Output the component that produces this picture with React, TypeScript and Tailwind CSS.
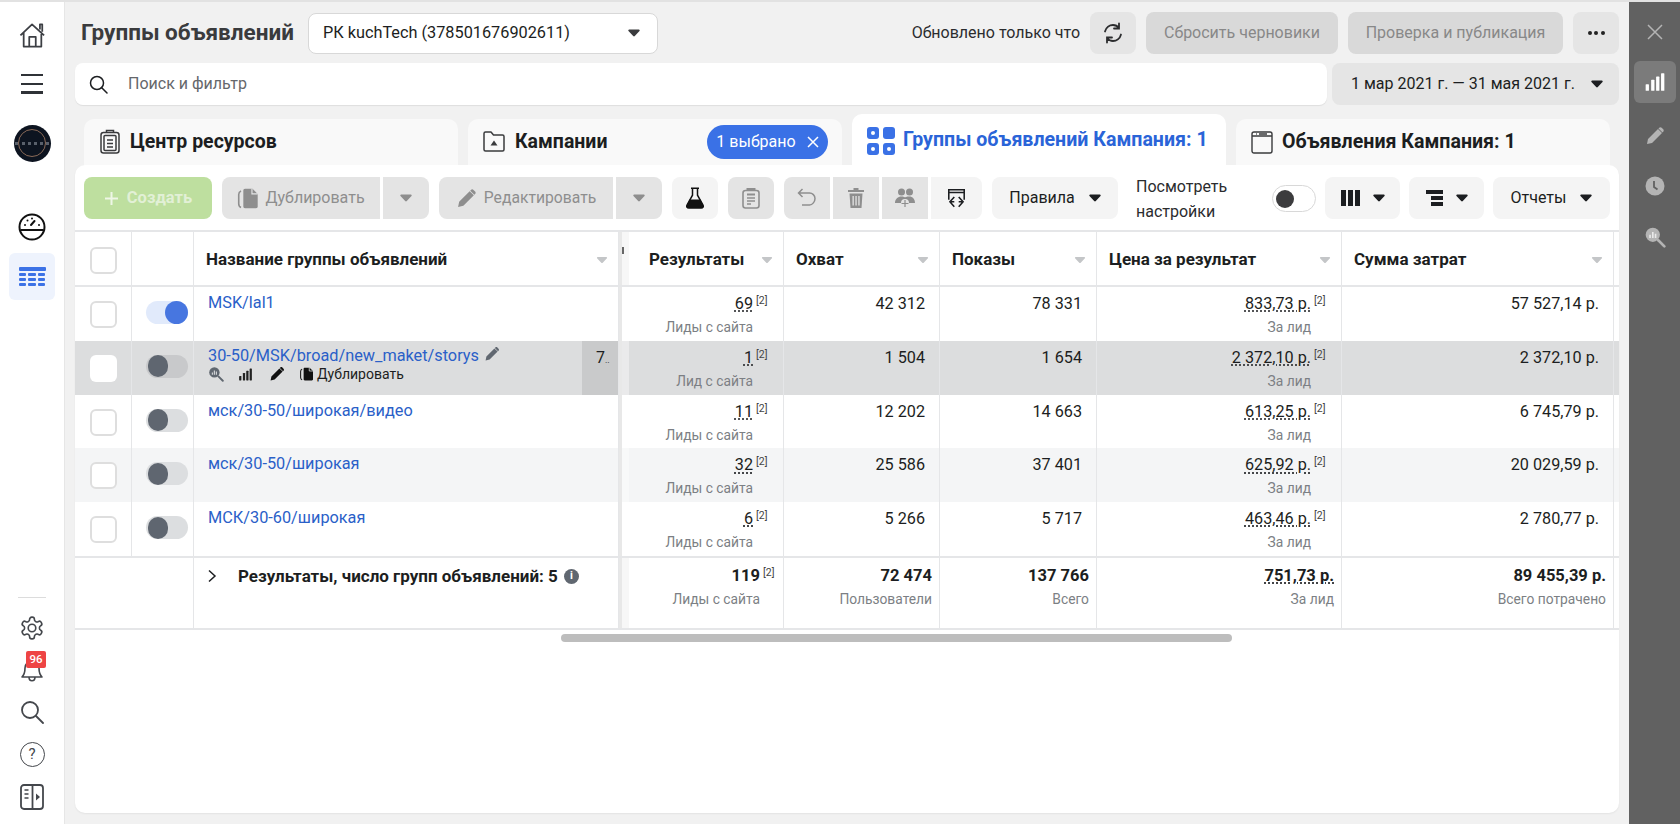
import React from "react";

// row data for the ad sets table
const rows = [
  { name: "MSK/lal1", on: true, res: "69", label: "Лиды с сайта", reach: "42 312", shows: "78 331", cost: "833,73 р.", sum: "57 527,14 р." },
  { name: "30-50/MSK/broad/new_maket/storys", on: false, hover: true, res: "1", label: "Лид с сайта", reach: "1 504", shows: "1 654", cost: "2 372,10 р.", sum: "2 372,10 р." },
  { name: "мск/30-50/широкая/видео", on: false, res: "11", label: "Лиды с сайта", reach: "12 202", shows: "14 663", cost: "613,25 р.", sum: "6 745,79 р." },
  { name: "мск/30-50/широкая", on: false, zebra: true, res: "32", label: "Лиды с сайта", reach: "25 586", shows: "37 401", cost: "625,92 р.", sum: "20 029,59 р." },
  { name: "МСК/30-60/широкая", on: false, res: "6", label: "Лиды с сайта", reach: "5 266", shows: "5 717", cost: "463,46 р.", sum: "2 780,77 р." },
];

const cols = "grid grid-cols-[57px_62px_425px_10px_155px_156px_157px_245px_272px_5px]";
const cellLine = "border-r border-[#e5e6e8]";

const Caret = ({ className = "" }: { className?: string }) => (
  <svg width="12" height="8" viewBox="0 0 12 8" className={className} fill="currentColor">
    <path d="M1.2 0.6h9.6c.8 0 1.2.9.7 1.5L6.8 7c-.4.5-1.2.5-1.6 0L.5 2.1C0 1.5.4.6 1.2.6z" />
  </svg>
);

const Pencil = ({ size = 20, className = "" }: { size?: number; className?: string }) => (
  <svg width={size} height={size} viewBox="0 0 20 20" className={className} fill="currentColor">
    <path d="M2 18l1-5L13 3l4 4L7 17l-5 1zM14.2 1.8c.7-.7 1.8-.7 2.5 0l1.5 1.5c.7.7.7 1.8 0 2.5l-.7.7-4-4 .7-.7z" />
  </svg>
);

const Duplicate = ({ size = 20, className = "" }: { size?: number; className?: string }) => (
  <svg width={size} height={size} viewBox="0 0 20 20" className={className} fill="currentColor">
    <path d="M7 1.500h6.500L18 6v11c0 .8-.6 1.500-1.500 1.500H7c-.8 0-1.500-.7-1.500-1.500V3C5.500 2.200 6.200 1.500 7 1.500z" />
    <path d="M3.500 3.500C2.300 4 1.500 5 1.500 6.500v8c0 1.500.8 2.800 2 3.300" fill="none" stroke="currentColor" strokeWidth="1.400" />
    <path d="M13 1.500V6h5" fill="none" stroke="#e4e5e6" strokeWidth="1" />
  </svg>
);

const SearchChart = ({ size = 20, className = "" }: { size?: number; className?: string }) => (
  <svg width={size} height={size} viewBox="0 0 20 20" className={className}>
    <circle cx="8" cy="8" r="6.500" fill="currentColor" />
    <path d="M13 13l5.500 5.500" stroke="currentColor" strokeWidth="2.400" strokeLinecap="round" />
    <path d="M5.500 8v3M8 5.500V11M10.500 7v4" stroke="#fff" strokeOpacity=".7" strokeWidth="1.500" />
  </svg>
);

const Bars = ({ size = 20, className = "" }: { size?: number; className?: string }) => (
  <svg width={size} height={size} viewBox="0 0 20 20" className={className} fill="currentColor">
    <rect x="1.500" y="12" width="3" height="6" rx=".6" />
    <rect x="6.500" y="8" width="3" height="10" rx=".6" />
    <rect x="11" y="5" width="3" height="13" rx=".6" />
    <rect x="15.500" y="2" width="3" height="16" rx=".6" />
  </svg>
);

const Toggle = ({ on, hover }: { on: boolean; hover?: boolean }) => (
  <div
    className={`flex h-[23px] w-[42px] items-center rounded-full ${on ? "justify-end bg-[#e1eafb]" : hover ? "bg-[#c8c9cb]" : "bg-[#dcdee0]"}`}
  >
    {on ? (
      <div className="h-[23px] w-[23px] rounded-full bg-[#4776e0]" />
    ) : (
      <div className="ml-[2px] h-[22px] w-[20px] rounded-full bg-[#5f6670]" />
    )}
  </div>
);

const Checkbox = ({ filled }: { filled?: boolean }) => (
  <div className={`h-[27px] w-[27px] rounded-[6px] bg-white ${filled ? "" : "border-2 border-[#dedede]"}`} />
);

const Sup = () => <span className="w-[16px] pl-[3px] text-[10.500px] leading-[14px] text-[#444]">[2]</span>;

const HeadCell = ({ title, className = "" }: { title: string; className?: string }) => (
  <div className={`flex items-center justify-between pl-[12px] pr-[10px] pt-[3px] ${cellLine} ${className}`}>
    <span className="text-[17px] font-bold text-[#1c1e21]">{title}</span>
    <Caret className="scale-90 text-[#c4c6c8]" />
  </div>
);

const NumCell = ({ value, sub, sup, dotted }: { value: string; sub?: string; sup?: boolean; dotted?: boolean }) => (
  <div className={`flex flex-col items-end pr-[14px] pt-[7px] ${cellLine}`}>
    <div className="flex h-[20px] items-start leading-[20px]">
      <span className={`text-[16.200px] text-[#1c1e21] ${dotted ? "underline decoration-dotted underline-offset-2" : ""}`}>{value}</span>
      {sup && <Sup />}
    </div>
    {sub && (
      <span className={`mt-[4px] text-[13.800px] leading-[18px] text-[#7c7f84] ${sup ? "pr-[16px]" : ""}`}>{sub}</span>
    )}
  </div>
);

const TotalCell = ({ value, sub, sup, dotted }: { value: string; sub: string; sup?: boolean; dotted?: boolean }) => (
  <div className={`flex flex-col items-end pr-[7px] pt-[8px] ${cellLine}`}>
    <div className="flex h-[20px] items-start leading-[20px]">
      <span className={`text-[16.500px] font-bold text-[#1c1e21] ${dotted ? "underline decoration-dotted underline-offset-2" : ""}`}>{value}</span>
      {sup && <Sup />}
    </div>
    <span className={`mt-[4px] text-[13.800px] leading-[18px] text-[#7c7f84] ${sup ? "pr-[16px]" : ""}`}>{sub}</span>
  </div>
);

const ToolBtn = ({ w, light, children }: { w: string; light?: boolean; children: React.ReactNode }) => (
  <div className={`flex h-[42px] items-center justify-center rounded-[8px] ${w} ${light ? "bg-[#f4f4f4] text-[#1c1e21]" : "bg-[#e4e4e4] text-[#8e8e8e]"}`}>
    {children}
  </div>
);

export default function App() {
  return (
    <div className="flex h-[824px] w-[1680px] flex-col overflow-hidden bg-[#f1f1f1] font-[Roboto,sans-serif] text-[#1c1e21]">
      <div className="h-[2px] shrink-0 bg-[#e2e2e2]" />
      <div className="flex min-h-0 flex-1">
        {/* left nav */}
        <aside className="flex w-[65px] shrink-0 flex-col items-center border-r border-[#e6e6e6] bg-white">
          <svg width="27" height="26" viewBox="0 0 29 28" className="mt-[20px] text-[#3c3f44]" fill="none" stroke="currentColor" strokeWidth="1.900">
            <path d="M1.500 14.500L14 2.500l13 12M5 11.500V26.500h19V11.500M11 26.500V16h7v10.500M22.500 8V2.500h2.500v8" strokeLinejoin="round" />
          </svg>
          <div className="mt-[26px] flex w-[22px] flex-col gap-[6.500px]">
            <div className="h-[2.200px] bg-[#2f3237]" />
            <div className="h-[2.200px] bg-[#2f3237]" />
            <div className="h-[2.200px] bg-[#2f3237]" />
          </div>
          <div className="mt-[31px] flex h-[37px] w-[37px] items-center justify-center overflow-hidden rounded-full bg-[#0d1420]">
            <div className="flex h-[28px] w-[28px] items-center justify-center rounded-full border border-[#8a6a58]">
              <div className="h-0 w-[34px] shrink-0 border-t-[3px] border-dotted border-[#59606b]" />
            </div>
          </div>
          <svg width="28" height="28" viewBox="0 0 28 28" className="mt-[51px] text-[#111]" fill="none" stroke="currentColor">
            <circle cx="14" cy="14" r="12.500" strokeWidth="2" />
            <path d="M2.500 17h23" strokeWidth="2" />
            <path d="M13 12l3.500-4" strokeWidth="2" strokeLinecap="round" />
            <circle cx="7" cy="12" r="1" fill="currentColor" stroke="none" />
            <circle cx="9.500" cy="7.500" r="1" fill="currentColor" stroke="none" />
            <circle cx="14" cy="5.500" r="1" fill="currentColor" stroke="none" />
            <circle cx="21" cy="12" r="1" fill="currentColor" stroke="none" />
          </svg>
          <div className="mt-[12px] flex h-[47px] w-[46px] flex-col items-center justify-center gap-[2px] rounded-[6px] bg-[#eef3fd]">
            <div className="h-[4px] w-[27px] rounded-[1px] bg-[#3c72e6]" />
            {[0, 1, 2].map((r) => (
              <div key={r} className="flex gap-[2px]">
                <div className="h-[3px] w-[7.600px] rounded-[1px] bg-[#3c72e6]" />
                <div className="h-[3px] w-[7.600px] rounded-[1px] bg-[#3c72e6]" />
                <div className="h-[3px] w-[7.600px] rounded-[1px] bg-[#3c72e6]" />
              </div>
            ))}
          </div>
          <div className="mt-auto h-px w-[28px] bg-[#dcdcdc]" />
          <svg width="26" height="26" viewBox="0 0 24 24" className="mt-[17px] text-[#44474c]" fill="none" stroke="currentColor" strokeWidth="1.500" strokeLinejoin="round">
            <path d="M12.220 2h-.44a2 2 0 0 0-2 2v.18a2 2 0 0 1-1 1.730l-.43.25a2 2 0 0 1-2 0l-.15-.08a2 2 0 0 0-2.730.73l-.22.38a2 2 0 0 0 .73 2.730l.15.1a2 2 0 0 1 1 1.720v.51a2 2 0 0 1-1 1.740l-.15.09a2 2 0 0 0-.73 2.730l.22.38a2 2 0 0 0 2.730.73l.15-.08a2 2 0 0 1 2 0l.43.25a2 2 0 0 1 1 1.730V20a2 2 0 0 0 2 2h.44a2 2 0 0 0 2-2v-.18a2 2 0 0 1 1-1.730l.43-.25a2 2 0 0 1 2 0l.15.08a2 2 0 0 0 2.730-.73l.22-.39a2 2 0 0 0-.73-2.730l-.15-.08a2 2 0 0 1-1-1.740v-.5a2 2 0 0 1 1-1.740l.15-.09a2 2 0 0 0 .73-2.730l-.22-.38a2 2 0 0 0-2.730-.73l-.15.08a2 2 0 0 1-2 0l-.43-.25a2 2 0 0 1-1-1.730V4a2 2 0 0 0-2-2z" />
            <circle cx="12" cy="12" r="3.500" />
          </svg>
          <div className="relative mt-[15px] flex h-[28px] w-[24px] items-center justify-center">
            <svg width="24" height="26" viewBox="0 0 24 26" className="text-[#44474c]" fill="none" stroke="currentColor" strokeWidth="1.600" strokeLinejoin="round">
              <path d="M5 11c0-4 3-7 7-7s7 3 7 7c0 5 1 7 3 9H2c2-2 3-4 3-9zM9 20c0 5 6 5 6 0" />
            </svg>
            <div className="absolute left-[6px] top-[-5px] flex h-[17px] w-[20px] items-center justify-center rounded-[2px] bg-[#ee4444] text-[11.500px] font-medium text-white">96</div>
          </div>
          <svg width="24" height="24" viewBox="0 0 24 24" className="mt-[16px] text-[#44474c]" fill="none" stroke="currentColor" strokeWidth="1.800">
            <circle cx="10" cy="10" r="8" />
            <path d="M16 16l7 7" strokeLinecap="round" />
          </svg>
          <div className="mt-[18px] flex h-[25px] w-[25px] items-center justify-center rounded-full border-[1.800px] border-[#44474c] text-[15px] leading-none text-[#44474c]">?</div>
          <svg width="24" height="26" viewBox="0 0 24 26" className="mb-[14px] mt-[17px] text-[#44474c]" fill="none" stroke="currentColor" strokeWidth="1.800">
            <rect x="1" y="1" width="22" height="24" rx="3" />
            <path d="M12.500 1v24" />
            <path d="M4.500 6h4M4.500 10h4M4.500 14h4" strokeWidth="1.500" />
            <path d="M16 9.500l4 3.500-4 3.500z" fill="currentColor" stroke="none" />
          </svg>
        </aside>

        {/* main column */}
        <main className="flex min-w-0 flex-1 flex-col pl-[10px] pr-[10px] pt-[10px]">
          <div className="flex h-[42px] shrink-0 items-center">
            <h1 className="ml-[6px] text-[22.500px] font-bold text-[#3a3b3d]">Группы объявлений</h1>
            <div className="ml-[14px] flex h-[41px] w-[350px] items-center justify-between rounded-[8px] border border-[#d8d8d8] bg-white pl-[14px] pr-[17px] text-[16.300px]">
              <span>РК kuchTech (378501676902611)</span>
              <Caret className="text-[#3a3b3d]" />
            </div>
            <span className="ml-auto text-[16px] text-[#2b2c2e]">Обновлено только что</span>
            <div className="ml-[10px] flex h-[42px] w-[46px] items-center justify-center rounded-[8px] bg-[#e5e5e5]">
              <svg width="22" height="22" viewBox="0 0 22 22" fill="none" stroke="#2b2c2e" strokeWidth="1.800" strokeLinecap="round">
                <path d="M3 9.500C4 5.500 7.500 3 11 3c2.500 0 4.600 1.200 6 3M17 1.500V6.500h-5M19 12.500c-1 4-4.500 6.500-8 6.500-2.500 0-4.600-1.200-6-3M5 20.500V15.500h5" />
              </svg>
            </div>
            <div className="ml-[10px] flex h-[42px] w-[192px] items-center justify-center rounded-[8px] bg-[#d9d9d9] text-[16px] text-[#888]">Сбросить черновики</div>
            <div className="ml-[10px] flex h-[42px] w-[215px] items-center justify-center rounded-[8px] bg-[#d9d9d9] text-[16px] text-[#888]">Проверка и публикация</div>
            <div className="ml-[10px] flex h-[42px] w-[46px] items-center justify-center gap-[2.500px] rounded-[8px] bg-[#e5e5e5]">
              <div className="h-[4px] w-[4px] rounded-full bg-[#222]" />
              <div className="h-[4px] w-[4px] rounded-full bg-[#222]" />
              <div className="h-[4px] w-[4px] rounded-full bg-[#222]" />
            </div>
          </div>

          <div className="mt-[9px] flex h-[42px] shrink-0 gap-[5px]">
            <div className="flex flex-1 items-center rounded-[8px] bg-white pl-[14px] shadow-[0_1px_1px_rgba(0,0,0,0.08)]">
              <svg width="19" height="19" viewBox="0 0 19 19" fill="none" stroke="#1c1e21" strokeWidth="1.500">
                <circle cx="8" cy="8" r="6.500" />
                <path d="M12.500 12.500l5.500 5.500" strokeLinecap="round" />
              </svg>
              <span className="ml-[20px] text-[16px] text-[#65676b]">Поиск и фильтр</span>
            </div>
            <div className="flex w-[287px] items-center justify-between rounded-[8px] bg-[#e5e5e5] pl-[19px] pr-[16px] text-[16px]">
              <span>1 мар 2021 г. — 31 мая 2021 г.</span>
              <Caret />
            </div>
          </div>

          {/* tabs */}
          <div className="mt-[9px] flex h-[51px] shrink-0 items-end gap-[10px] pl-[9px]">
            <div className="flex h-[46px] w-[374px] items-center gap-[10px] rounded-t-[10px] bg-[#f9f9f9] pl-[16px] pb-[1px]">
              <svg width="20" height="25" viewBox="0 0 20 25" fill="none" stroke="#3a3b3d" strokeWidth="1.500">
                <rect x="1" y="3.500" width="18" height="20.500" rx="2.500" />
                <rect x="4" y="6.500" width="12" height="15" rx="1" />
                <path d="M6.500 3.500V1.500h7v2M7 11h6M7 14.500h6M7 18h6" />
              </svg>
              <span className="text-[19.500px] font-bold">Центр ресурсов</span>
            </div>
            <div className="flex h-[46px] w-[374px] items-center rounded-t-[10px] bg-[#f9f9f9] pl-[15px] pr-[14px] pb-[1px]">
              <svg width="22" height="21" viewBox="0 0 22 21" fill="none" stroke="#3a3b3d" strokeWidth="1.500">
                <path d="M1 2.500c0-.8.7-1.500 1.500-1.500H8l2.500 3H19.500c.8 0 1.500.7 1.500 1.500v13c0 .8-.7 1.500-1.500 1.500h-17C1.700 20 1 19.300 1 18.500z" strokeLinejoin="round" />
                <path d="M11 9.500l3.500 5h-7z" fill="#3a3b3d" stroke="none" />
              </svg>
              <span className="ml-[10px] text-[19.500px] font-bold">Кампании</span>
              <div className="ml-auto flex h-[34px] w-[121px] items-center justify-center gap-[11px] rounded-full bg-[#3a71e6] text-[16px] text-white">
                <span>1 выбрано</span>
                <svg width="12" height="12" viewBox="0 0 12 12" stroke="#fff" strokeWidth="1.500">
                  <path d="M1 1l10 10M11 1L1 11" />
                </svg>
              </div>
            </div>
            <div className="flex h-[51px] w-[374px] items-start gap-[8px] rounded-t-[10px] bg-white pl-[15px] pt-[13px]">
              <div className="grid grid-cols-2 gap-[4px]">
                {[0, 1, 2, 3].map((n) => (
                  <div key={n} className="flex h-[12px] w-[12px] items-center justify-center rounded-[3px] bg-[#3a71e6]">
                    {n !== 1 && <div className="h-[4px] w-[4px] rounded-full bg-white" />}
                  </div>
                ))}
              </div>
              <span className="text-[19.600px] font-bold leading-[26px] text-[#2a64d8]">Группы объявлений Кампания: 1</span>
            </div>
            <div className="flex h-[46px] w-[374px] items-center gap-[9px] rounded-t-[10px] bg-[#f9f9f9] pl-[15px] pb-[1px]">
              <svg width="22" height="24" viewBox="0 0 22 24" fill="none" stroke="#3a3b3d" strokeWidth="1.400">
                <rect x="1" y="2" width="20" height="21" rx="2" />
                <path d="M1 6h20M5 4h.8M8 4h8" />
              </svg>
              <span className="text-[19.600px] font-bold">Объявления Кампания: 1</span>
            </div>
          </div>

          {/* panel */}
          <section className="mb-[11px] flex min-h-0 flex-1 flex-col overflow-hidden rounded-[10px] bg-white shadow-[0_1px_2px_rgba(0,0,0,0.06)]">
            <div className="flex h-[67px] shrink-0 items-start gap-[10px] border-b-2 border-[#e5e6e8] pl-[9px] pt-[12px]">
              <div className="flex h-[42px] w-[128px] items-center justify-center gap-[8px] rounded-[8px] bg-[#bedf9f] text-[16.500px] font-bold text-[#e2f0d6]">
                <svg width="15" height="15" viewBox="0 0 15 15" stroke="#eef6e6" strokeWidth="2">
                  <path d="M7.500 1v13M1 7.500h13" />
                </svg>
                Создать
              </div>
              <div className="flex gap-[3px]">
                <ToolBtn w="w-[158px] gap-[5px] rounded-r-none">
                  <Duplicate size={23} />
                  <span className="text-[16px]">Дублировать</span>
                </ToolBtn>
                <ToolBtn w="w-[46px] rounded-l-none"><Caret /></ToolBtn>
              </div>
              <div className="flex gap-[3px]">
                <ToolBtn w="w-[174px] gap-[7px] rounded-r-none">
                  <Pencil size={21} />
                  <span className="text-[15.700px]">Редактировать</span>
                </ToolBtn>
                <ToolBtn w="w-[46px] rounded-l-none"><Caret /></ToolBtn>
              </div>
              <ToolBtn w="w-[46px]" light>
                <svg width="20" height="22" viewBox="0 0 20 22" fill="none" stroke="#111" strokeWidth="1.500">
                  <path d="M6 1.200h8M7.500 1.200v7L2 18c-.8 1.500 0 3 1.800 3h12.400c1.800 0 2.600-1.500 1.800-3l-5.500-9.800v-7" />
                  <path d="M4.500 12.500h11l3 6.500c0 1.200-.8 2-2 2H3.500c-1.200 0-2-.8-2-2z" fill="#111" stroke="none" />
                </svg>
              </ToolBtn>
              <ToolBtn w="w-[46px]">
                <svg width="18" height="22" viewBox="0 0 18 22" fill="none" stroke="currentColor" strokeWidth="1.600">
                  <rect x="1" y="3.500" width="16" height="17.500" rx="2.500" />
                  <path d="M5.500 3.500V2h7v1.500M5 7.500h8" strokeWidth="2" />
                  <path d="M5 11h8M5 14h8M5 17h4" strokeWidth="1.300" />
                </svg>
              </ToolBtn>
              <div className="flex gap-[3px]">
                <ToolBtn w="w-[46px] rounded-r-none">
                  <svg width="20" height="20" viewBox="0 0 20 20" fill="none" stroke="currentColor" strokeWidth="1.500">
                    <path d="M5.500 1L1.500 5l4 4M2 5h10.500c3 0 5.500 2.500 5.500 5.500S15.500 17 12.500 17H5" />
                  </svg>
                </ToolBtn>
                <ToolBtn w="w-[46px] rounded-none">
                  <svg width="18" height="22" viewBox="0 0 18 22" fill="currentColor">
                    <path d="M6.500 1h5v2H17v2H1V3h5.500zM2.500 6.500h13L14.500 21h-11zM5.500 9v9.500h1.300V9zM8.400 9v9.500h1.300V9zM11.300 9v9.500h1.300V9z" fillRule="evenodd" />
                  </svg>
                </ToolBtn>
                <ToolBtn w="w-[46px] rounded-none">
                  <svg width="22" height="22" viewBox="0 0 22 22" fill="currentColor">
                    <circle cx="7.500" cy="5" r="3.500" />
                    <circle cx="15.500" cy="5" r="3.500" />
                    <path d="M1 16c0-4 3-6.500 6.500-6.500 2 0 3.500.8 3.500.8s1.500-.8 4.500-.8C18.500 9.500 21 12 21 16H15a4 4 0 0 0-8 0z" />
                    <path d="M11 13v7M7.500 16.500h7" stroke="currentColor" strokeWidth="1.200" />
                  </svg>
                </ToolBtn>
                <ToolBtn w="w-[51px] rounded-l-none" light>
                  <svg width="23" height="22" viewBox="0 0 20 20" fill="none" stroke="#1c1e21" strokeWidth="1.400">
                    <path d="M3 11.500V2.500h14v9M3 5h14" />
                    <path d="M8 9l-4 4.500L8 18M12 9l4 4.500-4 4.500M5 13.500h3M12 13.500h3" />
                  </svg>
                </ToolBtn>
              </div>
              <ToolBtn w="w-[126px] gap-[14px]" light>
                <span className="text-[16px]">Правила</span>
                <Caret />
              </ToolBtn>
              <div className="-mt-[3px] w-[134px] pl-[8px] text-[16px] leading-[25px] text-[#2b2c2e]">Посмотреть настройки</div>
              <div className="flex items-start gap-[9px]">
                <div className="mt-[8px] flex h-[27px] w-[44px] items-center rounded-full border border-[#d8d8d8] bg-white pl-[3px]">
                  <div className="h-[18px] w-[18px] rounded-full bg-[#3c3c3e]" />
                </div>
                <ToolBtn w="w-[75px] gap-[13px]" light>
                  <div className="flex gap-[2px]">
                    <div className="h-[16px] w-[5px] bg-[#1c1e21]" />
                    <div className="h-[16px] w-[5px] bg-[#1c1e21]" />
                    <div className="h-[16px] w-[5px] bg-[#1c1e21]" />
                  </div>
                  <Caret />
                </ToolBtn>
                <ToolBtn w="w-[75px] gap-[13px]" light>
                  <div className="flex flex-col items-end gap-[2px]">
                    <div className="h-[4px] w-[17px] bg-[#1c1e21]" />
                    <div className="h-[4px] w-[12px] bg-[#1c1e21]" />
                    <div className="h-[4px] w-[12px] bg-[#1c1e21]" />
                  </div>
                  <Caret />
                </ToolBtn>
                <ToolBtn w="w-[117px] gap-[14px]" light>
                  <span className="text-[16px]">Отчеты</span>
                  <Caret />
                </ToolBtn>
              </div>
            </div>

            {/* table */}
            <div className={`${cols} h-[55px] shrink-0 border-b-2 border-[#e5e6e8]`}>
              <div className={`flex items-center justify-center pt-[3px] ${cellLine}`}><Checkbox /></div>
              <div className={cellLine} />
              <HeadCell title="Название группы объявлений" />
              <div className="border-l-[3px] border-[#e8e8e8] bg-[#f7f7f7] pt-[15px]">
                <div className="h-[7px] w-[2px] bg-[#666]" />
              </div>
              <HeadCell title="Результаты" className="pl-[20px]" />
              <HeadCell title="Охват" />
              <HeadCell title="Показы" />
              <HeadCell title="Цена за результат" />
              <HeadCell title="Сумма затрат" />
              <div />
            </div>
            {rows.map((r) => (
              <div
                key={r.name}
                className={`${cols} h-[53.800px] shrink-0 ${r.hover ? "bg-[#dcddde]" : r.zebra ? "bg-[#f4f5f6]" : "bg-white"}`}
              >
                <div className={`flex justify-center pt-[14px] ${cellLine}`}><Checkbox filled={r.hover} /></div>
                <div className={`flex justify-start pl-[14px] pt-[14px] ${cellLine}`}><Toggle on={r.on} hover={r.hover} /></div>
                {r.hover ? (
                  <div className={`flex justify-between pl-[14px] ${cellLine}`}>
                    <div className="pt-[5px]">
                      <div className="flex items-start gap-[5px] text-[16.300px] leading-[20px] text-[#2a60c8]">
                        {r.name}
                        <Pencil size={16} className="text-[#606770]" />
                      </div>
                      <div className="flex h-[17px] items-center text-[14px] text-[#1c1e21]">
                        <SearchChart size={16} className="text-[#606770]" />
                        <Bars size={15} className="ml-[14px] text-[#222]" />
                        <Pencil size={16} className="ml-[16px] text-[#111]" />
                        <Duplicate className="ml-[12px] scale-75 text-[#111]" />
                        <span>Дублировать</span>
                      </div>
                    </div>
                    <div className="w-[36px] bg-[#c9cacb] pl-[14px] pt-[7px] text-[16px] leading-[20px]">7<span className="text-[9px]">..</span></div>
                  </div>
                ) : (
                  <div className={`pl-[14px] pt-[4px] ${cellLine}`}>
                    <span className="text-[16.300px] leading-[20px] text-[#2a60c8]">{r.name}</span>
                  </div>
                )}
                <div className="border-l-[3px] border-[#e8e8e8] bg-white/40" />
                <NumCell value={r.res} sub={r.label} sup dotted />
                <NumCell value={r.reach} />
                <NumCell value={r.shows} />
                <NumCell value={r.cost} sub="За лид" sup dotted />
                <NumCell value={r.sum} />
                <div />
              </div>
            ))}
            <div className={`${cols} h-[74px] shrink-0 border-y-2 border-[#e5e6e8]`}>
              <div className="col-span-2 border-r border-[#e5e6e8]" />
              <div className={`flex items-start pl-[13px] pt-[8px] ${cellLine}`}>
                <svg width="10" height="14" viewBox="0 0 10 14" className="mt-[3px]" fill="none" stroke="#1c1e21" strokeWidth="1.500">
                  <path d="M2 1.500l6 5.500-6 5.500" />
                </svg>
                <span className="ml-[21px] text-[17px] font-bold leading-[20px]">Результаты, число групп объявлений: 5</span>
                <div className="ml-[6px] mt-[3px] flex h-[15px] w-[15px] items-center justify-center rounded-full bg-[#606770] text-[11px] font-bold text-white">i</div>
              </div>
              <div className="border-l-[3px] border-[#e8e8e8] bg-[#f7f7f7]" />
              <TotalCell value="119" sub="Лиды с сайта" sup />
              <TotalCell value="72 474" sub="Пользователи" />
              <TotalCell value="137 766" sub="Всего" />
              <TotalCell value="751,73 р." sub="За лид" dotted />
              <TotalCell value="89 455,39 р." sub="Всего потрачено" />
              <div />
            </div>
            <div className="ml-[486px] mt-[4px] h-[8px] w-[671px] shrink-0 rounded-full bg-[#bdbdbd]" />
          </section>
        </main>

        {/* right dark rail */}
        <aside className="flex w-[51px] shrink-0 flex-col items-center bg-[#616161] text-[#b4b4b4]">
          <svg width="16" height="16" viewBox="0 0 16 16" className="mt-[22px]" stroke="currentColor" strokeWidth="1.500">
            <path d="M1 1l14 14M15 1L1 15" />
          </svg>
          <div className="mt-[21px] flex h-[42px] w-[42px] items-center justify-center rounded-[6px] bg-[#7b7b7b] text-white">
            <Bars size={22} />
          </div>
          <Pencil size={20} className="mt-[23px]" />
          <svg width="20" height="20" viewBox="0 0 20 20" className="mt-[30px]">
            <circle cx="10" cy="10" r="9.500" fill="currentColor" />
            <path d="M9 5v6l3.500 2.500" fill="none" stroke="#616161" strokeWidth="1.800" />
          </svg>
          <SearchChart size={22} className="mt-[30px]" />
        </aside>
      </div>
    </div>
  );
}
